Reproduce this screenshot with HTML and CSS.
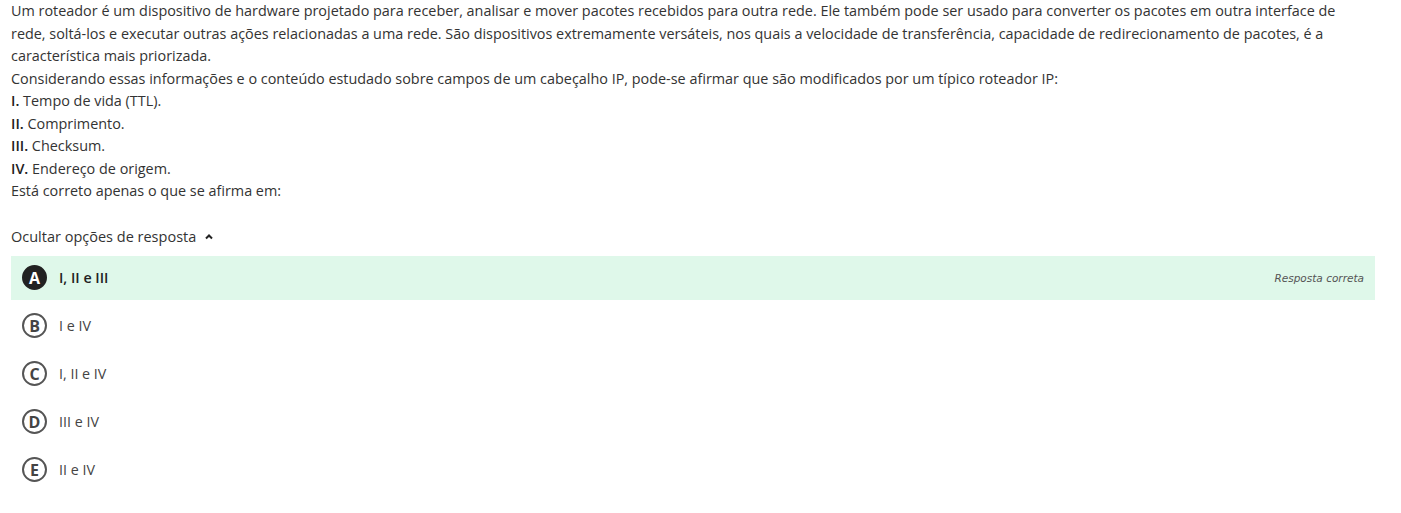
FILE: index.html
```html
<!DOCTYPE html>
<html lang="pt">
<head>
<meta charset="utf-8">
<link rel="stylesheet" href="styles.css">
</head>
<body>
<div class="page">
  <div class="statement">
    <p>Um roteador é um dispositivo de hardware projetado para receber, analisar e mover pacotes recebidos para outra rede. Ele também pode ser usado para converter os pacotes em outra interface de rede, soltá-los e executar outras ações relacionadas a uma rede. São dispositivos extremamente versáteis, nos quais a velocidade de transferência, capacidade de redirecionamento de pacotes, é a característica mais priorizada.</p>
    <p>Considerando essas informações e o conteúdo estudado sobre campos de um cabeçalho IP, pode-se afirmar que são modificados por um típico roteador IP:</p>
    <p><b>I.</b> Tempo de vida (TTL).</p>
    <p><b>II.</b> Comprimento.</p>
    <p><b>III.</b> Checksum.</p>
    <p><b>IV.</b> Endereço de origem.</p>
    <p>Está correto apenas o que se afirma em:</p>
  </div>
  <div class="toggle">Ocultar opções de resposta
    <svg class="chev" width="10" height="8" viewBox="0 0 10 8"><path d="M2 5.5 L5 2.5 L8 5.5" fill="none" stroke="#222" stroke-width="2"/></svg>
  </div>
  <ul class="options">
    <li class="opt correct"><span class="letter">A</span><span class="txt">I, II e III</span><span class="tag">Resposta correta</span></li>
    <li class="opt"><span class="letter">B</span><span class="txt">I e IV</span></li>
    <li class="opt"><span class="letter">C</span><span class="txt">I, II e IV</span></li>
    <li class="opt"><span class="letter">D</span><span class="txt">III e IV</span></li>
    <li class="opt"><span class="letter">E</span><span class="txt">II e IV</span></li>
  </ul>
</div>
</body>
</html>
```
FILE: styles.css
```css
html, body { margin: 0; padding: 0; background: #fff; }
body { font-family: "Open Sans", "Liberation Sans", sans-serif; color: #333; }
.page { width: 1364px; padding: 0 0 0 11px; }
.statement { font-size: 14.4px; line-height: 22.5px; max-width: 1345px; }
.statement p { margin: 0; }
.statement b { font-weight: 600; color: #222; }
.toggle { margin-top: 24px; font-size: 14.5px; line-height: 20px; color: #333; display: flex; align-items: center; gap: 8px; }
.chev { margin-top: 1px; }
.options { list-style: none; margin: 9px 0 0 0; padding: 0; display: flex; flex-direction: column; gap: 4px; }
.opt { height: 44px; display: flex; align-items: center; padding-left: 11px; font-size: 14.3px; color: #444; }
.opt.correct { background: #dff8ea; color: #222; font-weight: 600; }
.letter { width: 25px; height: 25px; box-sizing: border-box; border: 2px solid #555; border-radius: 50%; display: flex; align-items: center; justify-content: center; font-weight: 700; font-size: 16px; color: #444; margin-right: 12px; }
.correct .letter { background: #222; border-color: #222; color: #fff; }
.txt { flex: 1; }
.tag { font-style: italic; font-weight: 400; font-size: 10.5px; color: #555; margin-right: 11px; font-family: "DejaVu Sans", sans-serif; }
```
